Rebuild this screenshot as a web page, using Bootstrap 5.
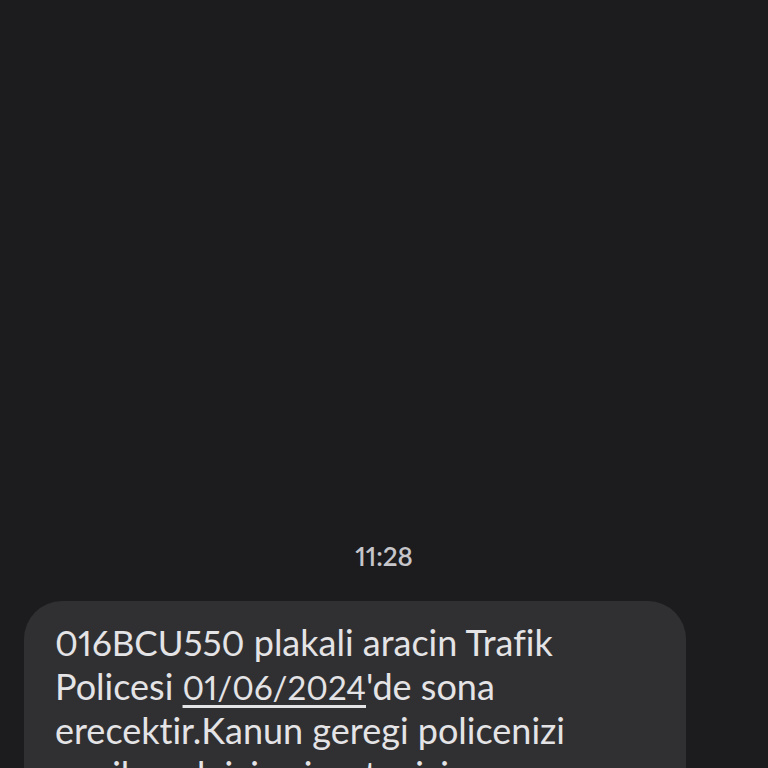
<!DOCTYPE html>
<html lang="tr">
<head>
<meta charset="utf-8">
<meta name="viewport" content="width=device-width, initial-scale=1">
<title>Mesajlar</title>
<link href="https://cdn.jsdelivr.net/npm/bootstrap@5.3.0/dist/css/bootstrap.min.css" rel="stylesheet">
<style>
body { background: #1c1c1e; color: #e4e3e6; font-family: Lato, "Open Sans", sans-serif; font-variant-numeric: proportional-nums; }
.thread { padding: 539px 82px 0 24px; }
.stamp { margin-right: -58px; font-size: 26px; line-height: 34px; font-weight: 600; color: #c6c5ca; }
.bubble { margin-top: 28px; padding: 19px 31px; border-radius: 38px 38px 0 0; background: #303032; font-size: 36px; line-height: 44px; font-variant-ligatures: no-common-ligatures; }
.plate { font-size: 35px; line-height: 1; }
.bubble a { font-size: 33px; line-height: 1; color: inherit; text-decoration-thickness: 3px; text-underline-offset: 5px; text-decoration-skip-ink: none; }
</style>
<script src="https://cdn.jsdelivr.net/npm/bootstrap@5.3.0/dist/js/bootstrap.bundle.min.js"></script>
</head>
<body>
<main class="vh-100 overflow-hidden thread">
  <time class="stamp d-block text-center" datetime="11:28">11:28</time>
  <p class="bubble mb-0"><span class="plate">016BCU550</span> plakali aracin Trafik Policesi <a href="#">01/06/2024</a>'de sona erecektir.Kanun geregi policenizi yenilemek icin sigortanizi</p>
</main>
</body>
</html>
